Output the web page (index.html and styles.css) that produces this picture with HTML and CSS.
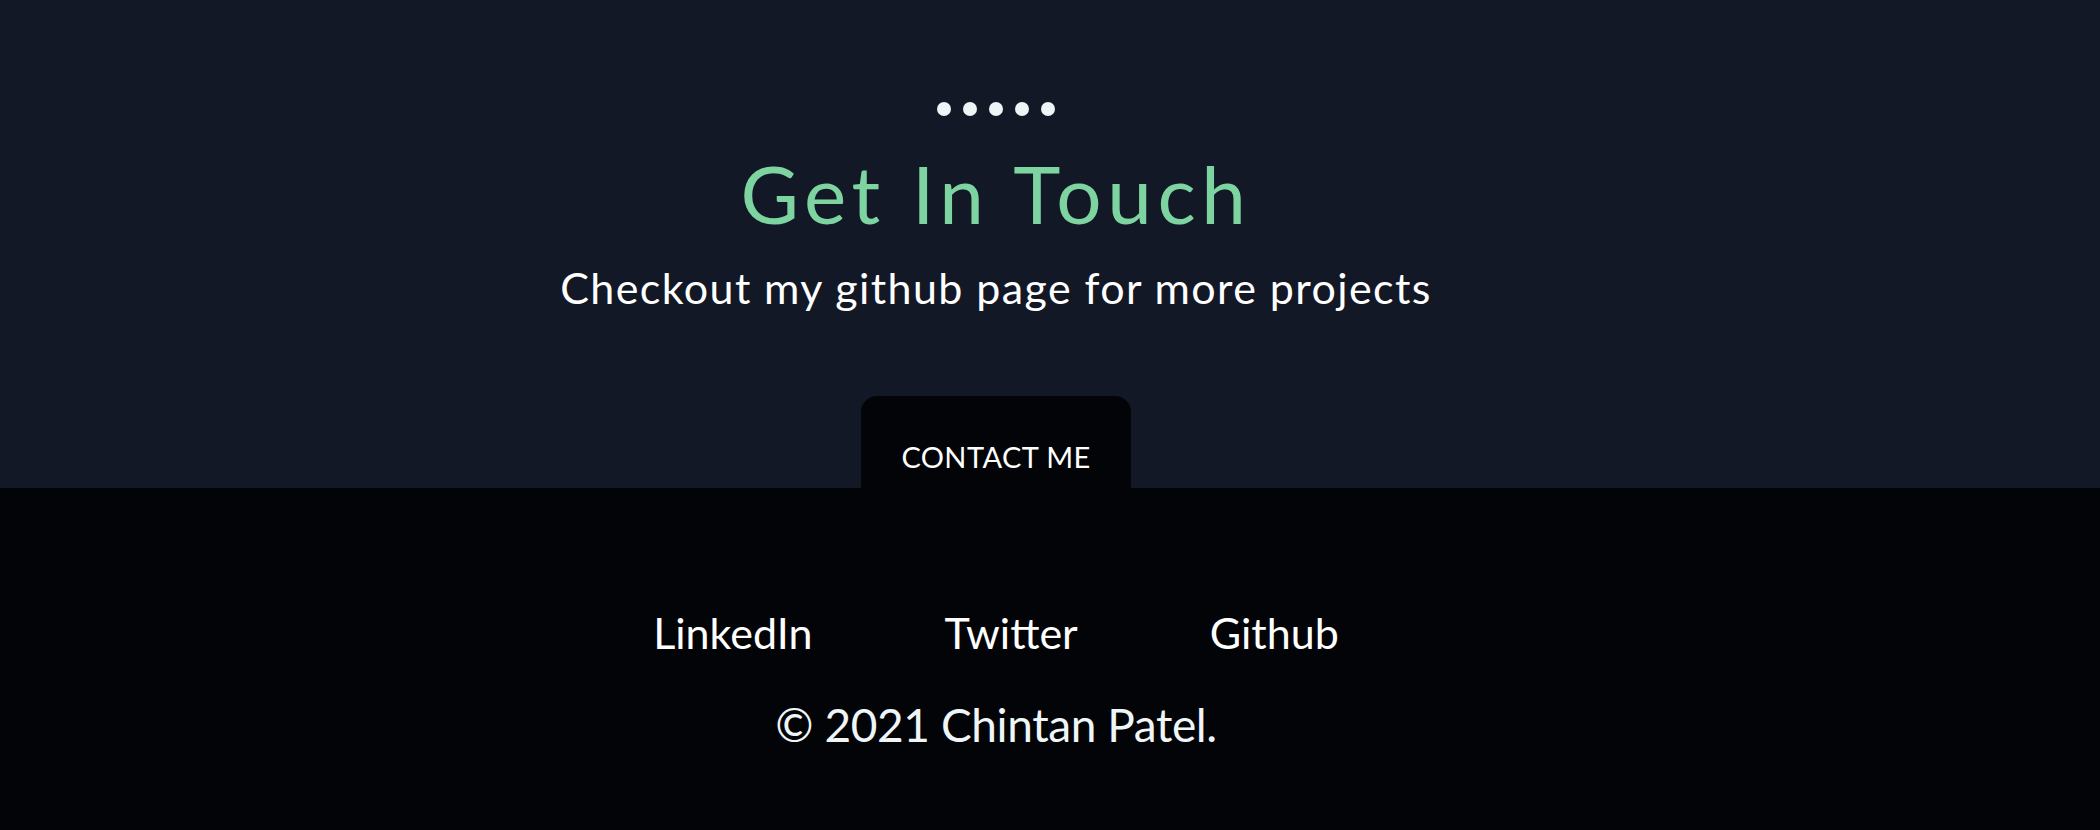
FILE: index.html
```html
<!DOCTYPE html>
<html lang="en">
<head>
<meta charset="utf-8">
<title>Get In Touch</title>
<link rel="stylesheet" href="styles.css">
</head>
<body>
<section class="hero">
  <div class="dots"><span></span><span></span><span></span><span></span><span></span></div>
  <h1 class="title">Get In Touch</h1>
  <p class="subtitle">Checkout my github page for more projects</p>
  <a class="contact" href="#">CONTACT ME</a>
</section>
<footer class="footer">
  <nav class="links">
    <a href="#">LinkedIn</a>
    <a href="#">Twitter</a>
    <a href="#">Github</a>
  </nav>
  <p class="copy">© 2021 Chintan Patel.</p>
</footer>
</body>
</html>
```
FILE: styles.css
```css
html, body {
  margin: 0;
  padding: 0;
  background: #030407;
}
body {
  width: 2100px;
  height: 830px;
  overflow: hidden;
  font-family: "Lato", "Liberation Sans", sans-serif;
}
.hero {
  background: #131826;
  height: 488px;
  box-sizing: border-box;
  padding: 102px 108px 0 0;
  display: flex;
  flex-direction: column;
  align-items: center;
}
.dots {
  display: flex;
  gap: 12px;
  height: 14px;
}
.dots span {
  width: 14px;
  height: 14px;
  border-radius: 50%;
  background: #eef5f7;
}
.title {
  margin: 37px 0 0;
  font-size: 80px;
  line-height: 80px;
  font-weight: 400;
  color: #7ed4a0;
  letter-spacing: 5.6px;
}
.subtitle {
  margin: 33px 0 0;
  font-size: 43px;
  line-height: 43px;
  color: #ffffff;
  letter-spacing: 1.4px;
}
.contact {
  margin-top: 87px;
  width: 270px;
  height: 92px;
  box-sizing: border-box;
  padding-top: 46px;
  text-align: center;
  background: #030407;
  border-radius: 16px 16px 0 0;
  color: #ffffff;
  text-decoration: none;
  font-size: 29px;
  line-height: 29px;
  letter-spacing: 0.4px;
}
.footer {
  height: 342px;
  box-sizing: border-box;
  padding: 123px 108px 0 0;
  display: flex;
  flex-direction: column;
  align-items: center;
}
.links {
  display: flex;
  gap: 132px;
}
.links a {
  color: #ffffff;
  text-decoration: none;
  font-size: 43px;
  line-height: 43px;
}
.copy {
  margin: 48px 0 0;
  font-size: 46px;
  line-height: 46px;
  color: #eef6f8;
  letter-spacing: -0.4px;
}
```
